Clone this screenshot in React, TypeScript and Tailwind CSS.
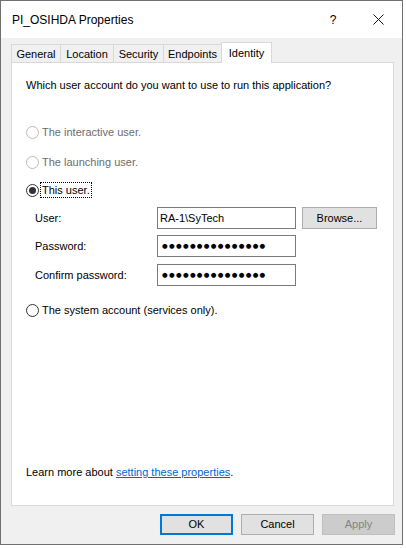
import React from "react";

const tabs = ["General", "Location", "Security", "Endpoints"];
const tabWidths = ["w-[50px]", "w-[54px]", "w-[51px]", "w-[59px]"];

function Radio({ checked, disabled }: { checked?: boolean; disabled?: boolean }) {
	return (
		<span
			className={`flex items-center justify-center w-[13px] h-[13px] rounded-full border bg-white shrink-0 ${
				disabled ? "border-[#bcbcbc]" : "border-[#333333]"
			}`}
		>
			{checked && <span className="w-[7px] h-[7px] rounded-full bg-[#333333]" />}
		</span>
	);
}

function FieldRow({ label, children }: { label: string; children: React.ReactNode }) {
	return (
		<div className="flex items-center h-[22px] pl-[9px]">
			<span className="w-[122px]">{label}</span>
			{children}
		</div>
	);
}

function PasswordBox() {
	return (
		<div className="flex items-center w-[139px] h-[22px] border border-[#7a7a7a] bg-white pl-[4px]">
			<span className="text-[6.5px] leading-none tracking-[1.3px] text-black font-['DejaVu_Sans',sans-serif]">
				●●●●●●●●●●●●●●●
			</span>
		</div>
	);
}

export default function App() {
	return (
		<div className="w-[406px] h-[548px] bg-white font-['Liberation_Sans',Arial,sans-serif] text-[11px] text-black">
			<div className="w-[403px] h-[545px] border border-[#6f6f6f] flex flex-col bg-[#f0f0f0]">
				{/* title bar */}
				<div className="h-[37px] bg-white flex items-center pl-[11px] shrink-0 text-[12px]">
					<span className="flex-1">PI_OSIHDA Properties</span>
					<span className="w-[10px] text-center mr-[35px]">?</span>
					<svg width="11" height="11" viewBox="0 0 11 11" className="mr-[18px]">
						<path d="M0.5 0.5 L10.5 10.5 M10.5 0.5 L0.5 10.5" stroke="#111" strokeWidth="1" />
					</svg>
				</div>

				<div className="flex-1 flex flex-col pl-[10px] pr-[8px] pt-[4px]">
					{/* tabs */}
					<div className="flex items-end h-[20px]">
						{tabs.map((t, i) => (
							<div
								key={t}
								className={`${tabWidths[i]} h-[18px] border border-b-0 border-[#d9d9d9] bg-[#f0f0f0] flex items-center justify-center pt-[1px] ${
									i > 0 ? "-ml-px" : ""
								}`}
							>
								{t}
							</div>
						))}
						<div className="relative z-10 -ml-px w-[51px] h-[21px] -mb-px border border-b-0 border-[#d9d9d9] bg-white flex items-start justify-center pt-[2px]">
							Identity
						</div>
					</div>

					{/* panel */}
					<div className="w-[383px] h-[444px] border border-[#d9d9d9] bg-white flex flex-col pl-[14px] pb-[25px] shrink-0">
						<div className="h-[16px] mt-[14px] flex items-center">
							Which user account do you want to use to run this application?
						</div>

						<div className="h-[16px] mt-[31px] flex items-center">
							<Radio disabled />
							<span className="ml-[3px] text-[#6d6d6d]">The interactive user.</span>
						</div>
						<div className="h-[16px] mt-[14px] flex items-center">
							<Radio disabled />
							<span className="ml-[3px] text-[#6d6d6d]">The launching user.</span>
						</div>
						<div className="h-[16px] mt-[12px] flex items-center">
							<Radio checked />
							<span className="ml-[1px] px-[1px] h-[16px] flex items-center border border-dotted border-black">
								This user.
							</span>
						</div>

						<div className="mt-[9px]">
							<FieldRow label="User:">
								<div className="flex items-center w-[139px] h-[22px] border border-[#7a7a7a] bg-white pl-[2px]">
									RA-1\SyTech
								</div>
								<button className="ml-[6px] w-[75px] h-[22px] border border-[#adadad] bg-[#e1e1e1] flex items-center justify-center">
									Browse...
								</button>
							</FieldRow>
						</div>
						<div className="mt-[6px]">
							<FieldRow label="Password:">
								<PasswordBox />
							</FieldRow>
						</div>
						<div className="mt-[7px]">
							<FieldRow label="Confirm password:">
								<PasswordBox />
							</FieldRow>
						</div>

						<div className="h-[16px] mt-[16px] flex items-center">
							<Radio />
							<span className="ml-[3px]">The system account (services only).</span>
						</div>

						<div className="h-[16px] mt-auto flex items-center">
							<span>
								Learn more about{" "}
								<span className="text-[#0066cc] underline">setting these properties</span>.
							</span>
						</div>
					</div>

					{/* buttons */}
					<div className="flex justify-end gap-[8px] mt-[8px] -mr-px">
						<button className="w-[73px] h-[21px] border-2 border-[#0078d7] bg-[#e1e1e1] flex items-center justify-center">
							OK
						</button>
						<button className="w-[73px] h-[21px] border border-[#adadad] bg-[#e1e1e1] flex items-center justify-center">
							Cancel
						</button>
						<button className="w-[73px] h-[21px] border border-[#bfbfbf] bg-[#cccccc] text-[#838383] flex items-center justify-center">
							Apply
						</button>
					</div>
				</div>
			</div>
		</div>
	);
}
